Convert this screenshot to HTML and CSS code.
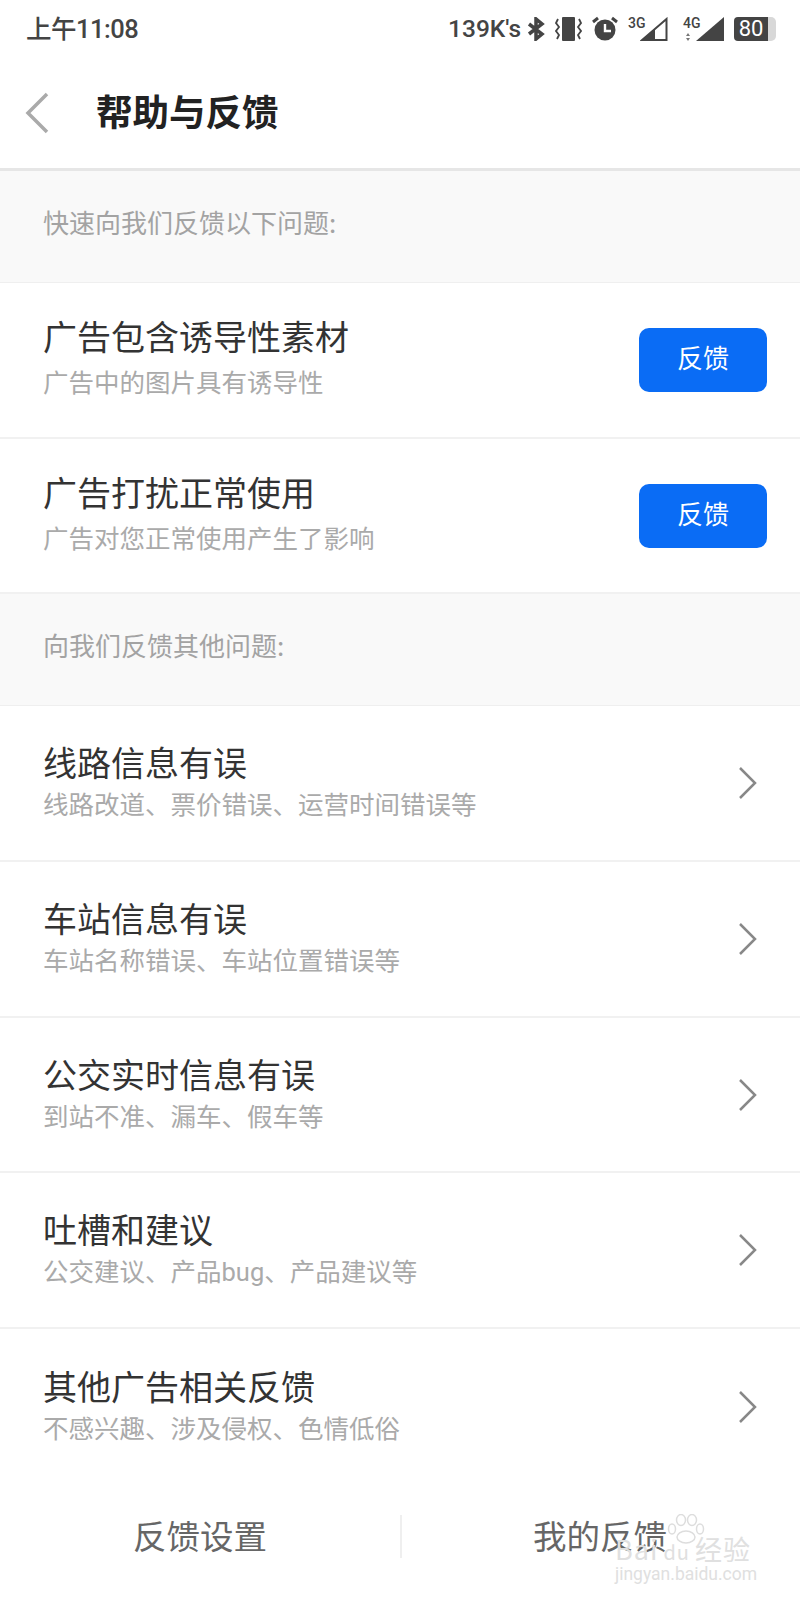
FILE: index.html
```html
<!DOCTYPE html>
<html lang="zh">
	<head>
		<meta charset="utf-8">
		<title>帮助与反馈</title>
		<link rel="stylesheet" href="styles.css">
	</head>
	<body>
		<div class="status">
			<span class="time">上午11:08</span>
			<div class="status-icons">
				<span class="speed">139K′s</span>
				<svg width="18" height="24" viewBox="0 0 18 24"><path d="M2 7l13 10-6 5V2l6 5L2 17" fill="none" stroke="#444" stroke-width="3.500"/></svg>
				<svg width="27" height="24" viewBox="0 0 27 24"><rect x="7" y="0" width="13" height="24" rx="1" fill="#444"/><path d="M3 2L1 6l3 4-3 4 3 4-2 4M24 2l2 4-3 4 3 4-3 4 2 4" fill="none" stroke="#444" stroke-width="1.800"/></svg>
				<svg width="26" height="25" viewBox="0 0 26 25"><circle cx="13" cy="14" r="10.500" fill="#444"/><path d="M13 8v7h6" fill="none" stroke="#fff" stroke-width="2.400"/><path d="M1 6l5-4M25 6l-5-4" stroke="#444" stroke-width="3"/></svg>
				<div class="signal">
					<span class="net">3G</span>
					<svg width="28" height="24" viewBox="0 0 28 24"><path d="M26.500 2v21H2z" fill="none" stroke="#444" stroke-width="2"/><path d="M15 12v12H1z" fill="#444"/></svg>
				</div>
				<div class="signal signal-4g">
					<span class="net">4G</span>
					<svg class="updown" width="6" height="8" viewBox="0 0 6 8"><path d="M3 0l2 3H1zM3 8L1 5h4z" fill="#777"/></svg>
					<svg width="29" height="24" viewBox="0 0 29 24"><path d="M29 0v24H1z" fill="#444"/></svg>
				</div>
				<div class="battery"><span class="battery-level">80</span><span class="battery-cap"></span></div>
			</div>
		</div>
		<header class="topbar">
			<svg class="back" width="26" height="44" viewBox="0 0 26 44"><path d="M23 3L4 22l19 19" fill="none" stroke="#aaa" stroke-width="3.500"/></svg>
			<h1>帮助与反馈</h1>
		</header>
		<main>
			<div class="section">快速向我们反馈以下问题:</div>
			<div class="row row-ad">
				<div class="row-text">
					<div class="row-title">广告包含诱导性素材</div>
					<div class="row-sub">广告中的图片具有诱导性</div>
				</div>
				<button class="btn">反馈</button>
			</div>
			<div class="row row-ad">
				<div class="row-text">
					<div class="row-title">广告打扰正常使用</div>
					<div class="row-sub">广告对您正常使用产生了影响</div>
				</div>
				<button class="btn">反馈</button>
			</div>
			<div class="section">向我们反馈其他问题:</div>
			<div class="row">
				<div class="row-text">
					<div class="row-title">线路信息有误</div>
					<div class="row-sub">线路改道、票价错误、运营时间错误等</div>
				</div>
				<svg class="chevron" width="20" height="34" viewBox="0 0 20 34"><path d="M2 2l15 15L2 32" fill="none" stroke="#888" stroke-width="2.500"/></svg>
			</div>
			<div class="row">
				<div class="row-text">
					<div class="row-title">车站信息有误</div>
					<div class="row-sub">车站名称错误、车站位置错误等</div>
				</div>
				<svg class="chevron" width="20" height="34" viewBox="0 0 20 34"><path d="M2 2l15 15L2 32" fill="none" stroke="#888" stroke-width="2.500"/></svg>
			</div>
			<div class="row">
				<div class="row-text">
					<div class="row-title">公交实时信息有误</div>
					<div class="row-sub">到站不准、漏车、假车等</div>
				</div>
				<svg class="chevron" width="20" height="34" viewBox="0 0 20 34"><path d="M2 2l15 15L2 32" fill="none" stroke="#888" stroke-width="2.500"/></svg>
			</div>
			<div class="row">
				<div class="row-text">
					<div class="row-title">吐槽和建议</div>
					<div class="row-sub">公交建议、产品bug、产品建议等</div>
				</div>
				<svg class="chevron" width="20" height="34" viewBox="0 0 20 34"><path d="M2 2l15 15L2 32" fill="none" stroke="#888" stroke-width="2.500"/></svg>
			</div>
			<div class="row row-last">
				<div class="row-text">
					<div class="row-title">其他广告相关反馈</div>
					<div class="row-sub">不感兴趣、涉及侵权、色情低俗</div>
				</div>
				<svg class="chevron" width="20" height="34" viewBox="0 0 20 34"><path d="M2 2l15 15L2 32" fill="none" stroke="#888" stroke-width="2.500"/></svg>
			</div>
		</main>
		<footer class="bottom">
			<div class="bottom-item">反馈设置</div>
			<div class="bottom-item bottom-right">我的反馈</div>
			<div class="watermark">
				<svg class="paw" width="38" height="30" viewBox="0 0 38 30"><g fill="none" stroke="#ddd" stroke-width="1.500"><ellipse cx="5" cy="15" rx="3.500" ry="5"/><ellipse cx="14" cy="6" rx="4.500" ry="5.500"/><ellipse cx="25" cy="6" rx="4.500" ry="5.500"/><ellipse cx="33" cy="15" rx="3.500" ry="5"/><ellipse cx="19" cy="23" rx="9" ry="6"/></g></svg>
				<div class="wm-main">Bai<span class="wm-du">du</span>经验</div>
				<div class="wm-url">jingyan.baidu.com</div>
			</div>
		</footer>
	</body>
</html>
```

FILE: styles.css
```css
* {
	box-sizing: border-box;
}
body {
	margin: 0;
	width: 800px;
	height: 1600px;
	position: relative;
	overflow: hidden;
	background: #fff;
	font-family: "Noto Sans CJK SC", Roboto, sans-serif;
}
.status {
	height: 57px;
	display: flex;
	align-items: center;
	justify-content: space-between;
	padding: 0 24px 0 26px;
	color: #444;
}
.time {
	font-size: 25.500px;
	font-weight: 500;
	font-family: Roboto, "Noto Sans CJK SC", sans-serif;
	letter-spacing: -0.5px;
	margin-bottom: 4px;
}
.status-icons {
	display: flex;
	align-items: center;
	gap: 10px;
}
.speed {
	font-family: Roboto, sans-serif;
	font-size: 24.500px;
	font-weight: 500;
	margin-right: -4px;
}
.signal {
	position: relative;
	display: flex;
	align-items: flex-end;
	width: 40px;
	justify-content: flex-end;
}
.signal-4g {
	margin-left: 5px;
	width: 41px;
}
.net {
	position: absolute;
	left: 0;
	top: -2px;
	font-family: Roboto, sans-serif;
	font-size: 14px;
	font-weight: 500;
}
.updown {
	position: absolute;
	left: 2px;
	bottom: 0;
}
.battery {
	display: flex;
	align-items: center;
}
.battery-level {
	width: 34px;
	height: 24px;
	background: #444;
	color: #fff;
	border-radius: 4px 0 0 4px;
	font-family: Roboto, sans-serif;
	font-size: 22px;
	line-height: 24px;
	text-align: center;
}
.battery-cap {
	width: 8px;
	height: 24px;
	background: #d8d8d8;
	border-radius: 0 5px 5px 0;
}
.topbar {
	height: 114px;
	display: flex;
	align-items: center;
	padding: 0 0 0 24px;
	border-bottom: 3px solid #e6e6e6;
}
.topbar h1 {
	margin: 0 0 4px 46px;
	font-size: 36.500px;
	font-weight: 700;
	color: #222;
}
.section {
	height: 112px;
	background: #f9f9f9;
	border-bottom: 1px solid #efefef;
	padding: 0 43px 10px;
	display: flex;
	align-items: center;
	font-size: 26px;
	color: #a3a3a3;
}
.row {
	height: 155.700px;
	display: flex;
	align-items: center;
	justify-content: space-between;
	padding: 0 33px 0 43px;
	border-bottom: 2px solid #f1f1f1;
}
.row-last {
	border-bottom: none;
}
.row-text {
	padding-bottom: 4px;
}
.row-ad .row-text {
	padding-bottom: 5px;
}
.row-title {
	font-size: 34px;
	line-height: 46px;
	color: #333;
}
.row-sub {
	font-family: Roboto, "Noto Sans CJK SC", sans-serif;
	font-size: 25.500px;
	line-height: 36px;
	margin-top: 2px;
	color: #aaa;
}
.row-ad .row-sub {
	margin-top: 6px;
}
.btn {
	width: 128px;
	height: 64px;
	border: none;
	border-radius: 10px;
	background: #0a6cf5;
	color: #fff;
	font-family: inherit;
	font-size: 26px;
	padding: 0 0 6px;
}
.chevron {
	margin-right: 9px;
}
.bottom {
	position: absolute;
	left: 0;
	right: 0;
	bottom: 0;
	height: 108px;
	display: flex;
}
.bottom-item {
	flex: 1;
	display: flex;
	align-items: center;
	justify-content: center;
	font-size: 33.500px;
	color: #666;
	padding-bottom: 24px;
}
.bottom-right {
	position: relative;
}
.bottom-right::before {
	content: "";
	position: absolute;
	left: 0;
	top: 23px;
	height: 43px;
	width: 2px;
	background: #efefef;
}
.watermark {
	position: absolute;
	left: 615px;
	top: 0;
	width: 140px;
	color: #e0e0e0;
}
.paw {
	position: absolute;
	left: 52px;
	top: 22px;
}
.wm-main {
	position: absolute;
	left: 0;
	top: 41px;
	white-space: nowrap;
	font-size: 27px;
	line-height: 32px;
	letter-spacing: 1px;
}
.wm-du {
	font-size: 20px;
	margin: 0 5px;
}
.wm-url {
	position: absolute;
	left: 0;
	top: 72px;
	white-space: nowrap;
	font-family: Roboto, sans-serif;
	font-size: 17.500px;
	line-height: 20px;
}
```
